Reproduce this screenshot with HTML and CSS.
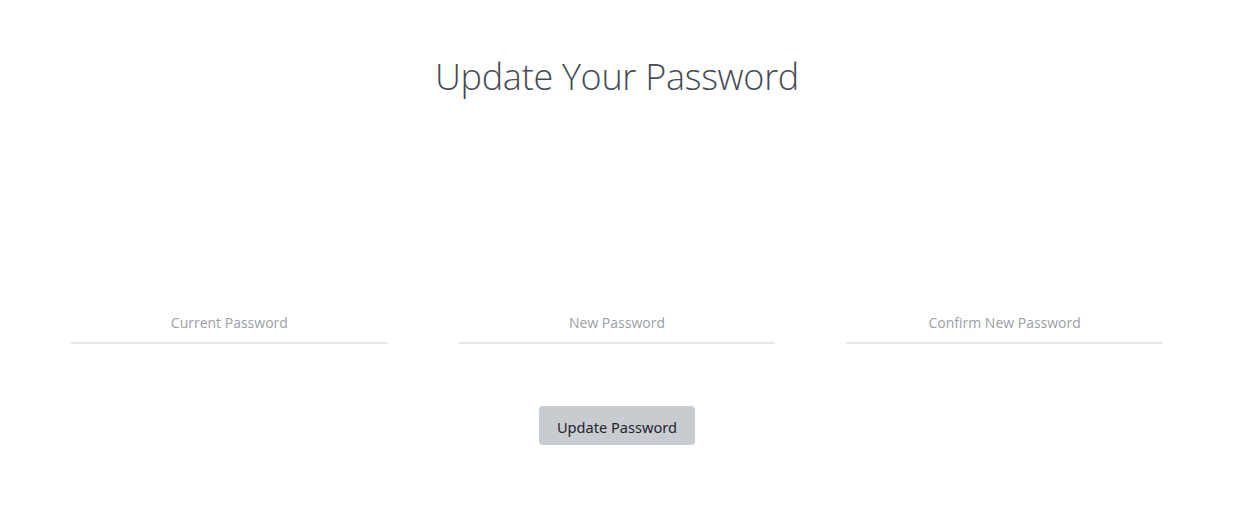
FILE: index.html
```html
<!DOCTYPE html>
<html lang="en">
<head>
<meta charset="utf-8">
<title>Update Your Password</title>
<link rel="stylesheet" href="styles.css">
</head>
<body>
<main class="page">
  <h1 class="title">Update Your Password</h1>
  <form class="form">
    <div class="fields">
      <input class="field" type="password" placeholder="Current Password">
      <input class="field" type="password" placeholder="New Password">
      <input class="field" type="password" placeholder="Confirm New Password">
    </div>
    <div class="actions">
      <button class="btn" type="button">Update Password</button>
    </div>
  </form>
</main>
</body>
</html>
```

FILE: styles.css
```css
* { box-sizing: border-box; }
html, body { margin: 0; padding: 0; background: #fff; }
body { font-family: "Open Sans", "Noto Sans", sans-serif; }
.page {
  display: flex;
  flex-direction: column;
  align-items: center;
  padding: 51px 71px 0;
}
.title {
  margin: 0;
  font-size: 36px;
  font-weight: 300;
  line-height: 52px;
  color: #454b53;
  letter-spacing: -0.3px;
}
.form {
  width: 100%;
  margin-top: 200px;
  display: flex;
  flex-direction: column;
  align-items: center;
}
.fields {
  width: 100%;
  display: grid;
  grid-template-columns: repeat(3, 1fr);
  column-gap: 71px;
}
.field {
  height: 41px;
  border: none;
  border-bottom: 2px solid #e6e9eb;
  background: transparent;
  text-align: center;
  font-family: "Open Sans", "Noto Sans", sans-serif;
  font-size: 14px;
  color: #333;
  outline: none;
  padding: 0;
}
.field::placeholder { color: #9aa0a6; opacity: 1; }
.actions { margin-top: 62px; }
.btn {
  height: 39px;
  padding: 3px 18px 0;
  border: none;
  border-radius: 4px;
  background: #c8cbcf;
  color: #1f2430;
  font-family: "Noto Sans", "Open Sans", sans-serif;
  font-size: 14.6px;
  cursor: pointer;
}
```
